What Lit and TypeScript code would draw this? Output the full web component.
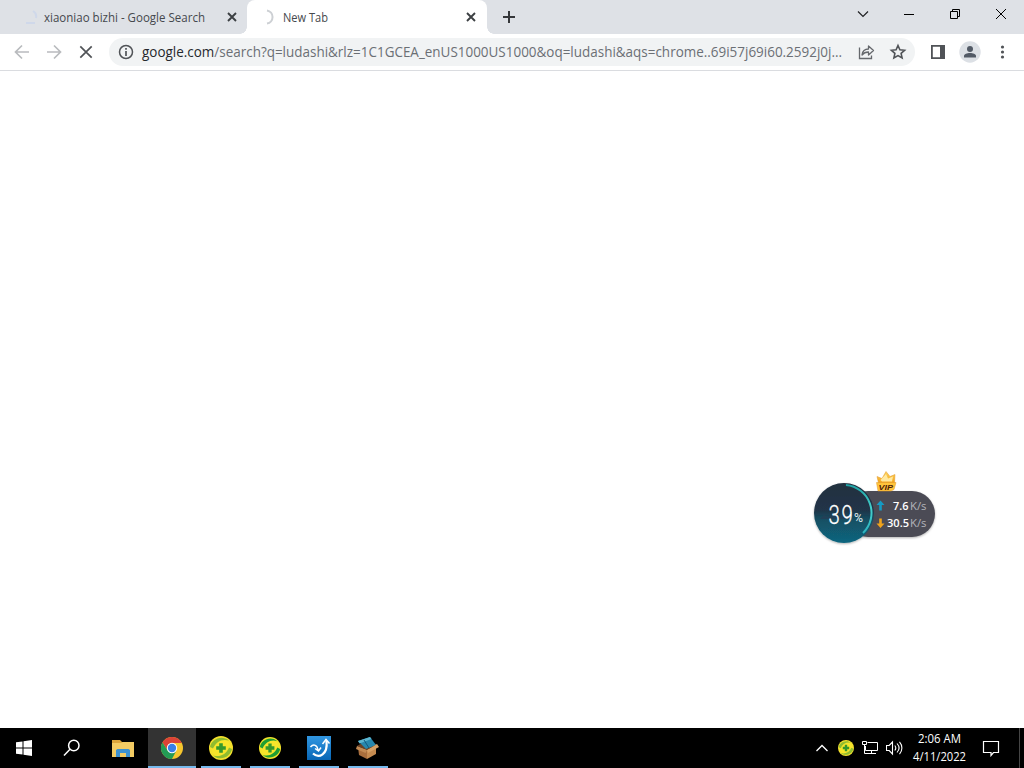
/**
 * Desktop with a browser window, taskbar and traffic monitor widget
 */
import { LitElement, html, svg, css } from 'lit'
import { customElement, property } from 'lit/decorators.js'

// Single line of text fitted to a fixed width
const label = (text: unknown, width: number, cls = '') => html`
  <svg class="label ${cls}" width=${width} height="20">
    <text x="0" y="15" textLength=${width} lengthAdjust="spacingAndGlyphs">${text}</text>
  </svg>
`

@customElement('browser-tab')
export class BrowserTab extends LitElement {
  static styles = css`
    :host {
      display: flex;
      align-items: center;
      box-sizing: border-box;
      height: 34px;
      padding: 0 8px 0 14px;
      color: #45484d;
    }
    :host([active]) {
      position: relative;
      background: #fff;
      border-radius: 8px 8px 0 0;
    }
    /* Flared feet of the active tab */
    :host([active])::before,
    :host([active])::after {
      content: '';
      position: absolute;
      bottom: 0;
      width: 7px;
      height: 7px;
    }
    :host([active])::before {
      left: -7px;
      background: radial-gradient(circle at 0 0, transparent 6.500px, #fff 7px);
    }
    :host([active])::after {
      right: -7px;
      background: radial-gradient(circle at 100% 0, transparent 6.500px, #fff 7px);
    }
    .label {
      font: 12px 'Open Sans', 'Noto Sans', sans-serif;
      fill: currentColor;
      display: block;
      overflow: visible;
      margin: -1px auto 0 6px;
    }
  `

  @property({ type: String }) name = ''
  @property({ type: Number }) textWidth = 50
  @property({ type: Boolean, reflect: true }) active = false

  render() {
    return html`
      <svg width="16" height="16" fill="none" stroke-width="2">
        ${this.active
          ? svg`<path d="M6 1.400A6.700 6.700 0 0 1 6 14.600" stroke="#cdd0d4"/>`
          : svg`<path d="M11 2a6.500 6.500 0 0 1 3 7M4 14h9" stroke="#cfd8ea"/>`}
      </svg>
      ${label(this.name, this.textWidth)}
      <svg width="16" height="16" stroke="#3c4043" stroke-width="1.900">
        <path d="M4 4l8 8M12 4l-8 8" />
      </svg>
    `
  }
}

@customElement('traffic-widget')
export class TrafficWidget extends LitElement {
  static styles = css`
    :host {
      display: block;
      font-family: 'Open Sans', 'Noto Sans', sans-serif;
    }
    svg {
      display: block;
    }
    .load {
      font: 25.500px Roboto, sans-serif;
      font-weight: 300;
      fill: #fff;
      stroke: #fff;
      stroke-width: 0.3px;
    }
    .percent {
      font: 12px Roboto, sans-serif;
      fill: #e3eff3;
    }
    .rate {
      font-size: 11.500px;
      font-weight: 600;
      fill: #fff;
    }
    .unit {
      font-size: 11.500px;
      fill: #b3b4bb;
    }
    .vip {
      font: italic 900 8px 'Liberation Sans', sans-serif;
      fill: #4c1d08;
    }
  `

  render() {
    return html`
      <svg width="130" height="84" viewBox="810 466 130 84">
        <defs>
          <linearGradient id="disc" x1="0" y1="0" x2="0" y2="1">
            <stop offset="0" stop-color="#20303f" />
            <stop offset=".45" stop-color="#203448" />
            <stop offset=".62" stop-color="#135064" />
            <stop offset="1" stop-color="#10667f" />
          </linearGradient>
          <linearGradient id="arc" x1="0" y1="0" x2="0" y2="1">
            <stop offset="0" stop-color="#1fa3a5" />
            <stop offset=".5" stop-color="#45d0cc" />
            <stop offset="1" stop-color="#2cb3bf" />
          </linearGradient>
          <linearGradient id="gold" x1="0" y1="0" x2="0" y2="1">
            <stop offset="0" stop-color="#ffd65c" />
            <stop offset="1" stop-color="#f1a21b" />
          </linearGradient>
          <filter id="shade" x="-10%" y="-10%" width="120%" height="130%">
            <feDropShadow dx="0" dy="1" stdDeviation="1" flood-opacity=".3" />
          </filter>
        </defs>
        <g filter="url(#shade)">
          <rect x="845" y="491" width="90" height="46" rx="23" fill="#4b4b55" />
          <circle cx="844" cy="513" r="30" fill="url(#disc)" />
        </g>
        <path d="M820 519l4-4 4 2 5-5 6 5 5-4 8 6z" fill="#214057" />
        <path d="M846 485a28 28 0 0 1 17 48" fill="none" stroke="url(#arc)" stroke-width="2" />
        <text class="load" transform="translate(828.500 524) scale(.8 1)" x="0 16.300" y="0">39</text>
        <text class="percent" x="854" y="522" textLength="9" lengthAdjust="spacingAndGlyphs">%</text>
        <path d="M880.500 500.500l4 4.500h-2.700v5.500h-2.600V505h-2.700z" fill="#159bc4" />
        <path d="M880.500 528l4-4.500h-2.700v-5h-2.600v5h-2.700z" fill="#f0a31c" />
        <text class="rate" x="893" y="510" textLength="15.500" lengthAdjust="spacingAndGlyphs">7.6</text>
        <text class="unit" x="910" y="510" textLength="16.500" lengthAdjust="spacingAndGlyphs">K/s</text>
        <text class="rate" x="887" y="527" textLength="22" lengthAdjust="spacingAndGlyphs">30.5</text>
        <text class="unit" x="910" y="527" textLength="16.500" lengthAdjust="spacingAndGlyphs">K/s</text>
        <g stroke="#e0962a" stroke-width=".5">
          <path d="M878.500 483l-1.500-6.500 5 2 4-7 4 5 5-2-.5 8.500z" fill="url(#gold)" />
          <path d="M880.500 480l5.500-6 2 4.500 5-2-1 5h-10z" fill="#ffe9a0" stroke="none" />
          <path d="M876.500 482.500h19.500l-2 7-3 1.500h-13z" fill="#ffc43b" />
        </g>
        <text class="vip" x="878.500" y="489.500" textLength="14.500" lengthAdjust="spacingAndGlyphs">VIP</text>
      </svg>
    `
  }
}

// Round yellow and green badge with a plus in the middle
const shield = (size: number, edge = '#f4e02c', swirl = '#8fbc30') => html`
  <svg width=${size} height=${size} viewBox="0 0 24 24">
    <circle cx="12" cy="12" r="12" fill=${edge} />
    <circle cx="12" cy="12" r="9.500" fill="#f7e52a" />
    <path d="M1 11C2 4 12-2 20 4.500c-7-2-13 1-16 8zM23 13c-1 7-11 13-19 6.500 7 2 13-1 16-8z" fill=${swirl} />
    <path d="M12 7.200v9.600M7.200 12h9.600" stroke="#35982c" stroke-width="3.600" />
  </svg>
`

const chromeIcon = html`
  <svg width="22" height="22" viewBox="0 0 22 22">
    <circle cx="11" cy="11" r="11" fill="#f6c62e" />
    <path d="M11 6h9.800A11 11 0 0 0 1.470 5.500L6.700 13.500z" fill="#dc4337" />
    <path d="M1.470 5.500A11 11 0 0 0 11 22l4.400-8.500H6.700z" fill="#239b55" />
    <circle cx="11" cy="11" r="5.200" fill="#fff" />
    <circle cx="11" cy="11" r="4.200" fill="#397fe8" />
  </svg>
`

const folderIcon = html`
  <svg width="22" height="19" viewBox="0 0 22 19">
    <path d="M0 1h8l2 2h11v15H0z" fill="#dca53b" />
    <path d="M0 4h9l2-1h11v15H0z" fill="#f3cb63" />
    <path d="M4 18v-7l1.500-1h11l1.500 1v7h-4v-4H8v4z" fill="#3d91cf" />
  </svg>
`

const swirlIcon = html`
  <svg width="24" height="24" viewBox="0 0 24 24">
    <defs>
      <linearGradient id="swirl" x1="0" y1="0" x2="0" y2="1">
        <stop offset="0" stop-color="#3197e2" />
        <stop offset="1" stop-color="#0866b5" />
      </linearGradient>
    </defs>
    <path d="M0 0h24v24H0z" fill="url(#swirl)" />
    <g fill="none" stroke="#fff">
      <path d="M3.500 11c3-3.500 7-2 7.500 3.500M8 12.500l3.500 2.500 2.500-3.500" stroke-width="1.500" />
      <path d="M6 17.500c6 5.500 15 1 13.500-12.500" stroke-width="2.200" />
      <path d="M15.500 8l3.500-4.500 3.500 4" stroke-width="1.500" />
    </g>
  </svg>
`

const boxIcon = html`
  <svg width="23" height="24" viewBox="0 0 23 24">
    <path d="M2 11l9 3v9l-8-4z" fill="#a86e3d" />
    <path d="M11 14l9-4v8l-9 5z" fill="#c58b50" />
    <path d="M1 10l5-3 15 1-10 6z" fill="#694024" />
    <path d="M2 5l12-4 6 8-10 4z" fill="#2687ae" />
    <path d="M2 5l12-4 1.500 2L3.500 7.500z" fill="#5cb5d0" />
    <path d="M8 4l5 8" stroke="#12577c" />
    <path d="M11 14l10-6 2 3-11 6z" fill="#d5a066" />
    <path d="M1 10l10 4-1.500 3L0 13z" fill="#c18a54" />
  </svg>
`

@customElement('app-root')
export class AppRoot extends LitElement {
  static styles = css`
    :host {
      display: flex;
      flex-direction: column;
      position: relative;
      width: 1024px;
      height: 768px;
      overflow: hidden;
      background: #fff;
      font-family: 'Open Sans', 'Noto Sans', sans-serif;
    }
    svg {
      display: block;
      flex: none;
    }
    .label {
      overflow: visible;
      fill: currentColor;
    }

    /* Tab strip */
    .tabs {
      display: flex;
      height: 34px;
      background: #dee1e6;
    }
    .first {
      width: 247px;
      padding-left: 22px;
      padding-right: 7px;
    }
    .second {
      width: 240px;
    }
    .new-tab {
      margin: 10px auto 0 15px;
    }
    .window-buttons {
      display: flex;
      width: 184px;
      padding-top: 6px;
    }
    .window-buttons svg {
      width: 46px;
      height: 16px;
    }

    /* Toolbar */
    .toolbar {
      display: flex;
      align-items: center;
      box-sizing: border-box;
      height: 37px;
      padding-left: 12px;
      border-bottom: 1px solid #dadce0;
    }
    .nav {
      display: flex;
      gap: 12px;
    }
    .address {
      display: flex;
      align-items: center;
      box-sizing: border-box;
      width: 806px;
      height: 28px;
      margin-left: 13px;
      padding: 0 8px;
      border-radius: 14px;
      background: #f1f3f4;
    }
    .url {
      margin: -1px 14px 0 7px;
      font-size: 14.200px;
      color: #6b6f74;
    }
    .domain {
      fill: #25282c;
    }
    .star {
      margin-left: 13px;
    }
    .actions {
      display: flex;
      align-items: center;
      gap: 11px;
      margin-left: 13px;
    }

    .page {
      flex: 1;
    }
    .widget {
      position: absolute;
      left: 810px;
      top: 466px;
    }

    /* Taskbar */
    .taskbar {
      display: flex;
      height: 40px;
      background: #000;
      color: #fff;
    }
    .item {
      display: flex;
      align-items: center;
      justify-content: center;
      box-sizing: border-box;
      width: 48px;
    }
    .item.pinned {
      width: 52px;
      padding-left: 2px;
    }
    .item.running {
      width: 49px;
      background: linear-gradient(#76b9ed, #76b9ed) center bottom / 40px 2px no-repeat;
    }
    .item.current {
      background: linear-gradient(#76b9ed, #76b9ed) center bottom / 48px 2px no-repeat, #333;
    }
    .tray {
      display: flex;
      align-items: center;
      margin-left: auto;
    }
    .badge {
      padding: 0 0 0 9px;
    }
    .clock {
      display: flex;
      flex-direction: column;
      align-items: center;
      width: 53px;
      margin: 0 16px 0 9px;
      padding-bottom: 4px;
      font-size: 12px;
    }
    .clock .label {
      height: 18px;
    }
    .desktop-edge {
      height: 40px;
      width: 4px;
      margin-left: 19px;
      border-left: 1px solid #454545;
    }
  `

  render() {
    return html`
      <div class="tabs">
        <browser-tab class="first" name="xiaoniao bizhi - Google Search" .textWidth=${161}></browser-tab>
        <browser-tab class="second" name="New Tab" .textWidth=${45} active></browser-tab>
        <svg class="new-tab" width="14" height="14" stroke="#35373a" stroke-width="2">
          <path d="M7 1v12M1 7h12" />
        </svg>
        <div class="window-buttons">
          <svg viewBox="0 0 46 16" fill="none" stroke="#202124" stroke-width="1.200"><path d="M18 5.500l5 5 5-5" /></svg>
          <svg viewBox="0 0 46 16" stroke="#000"><path d="M18 8.500h10" /></svg>
          <svg viewBox="0 0 46 16" fill="none" stroke="#000">
            <path d="M18.500 5.500h7v7h-7zM20.500 5.500v-2h7v7h-2" />
          </svg>
          <svg viewBox="0 0 46 16" stroke="#000"><path d="M18 3l10 10M28 3L18 13" /></svg>
        </div>
      </div>

      <div class="toolbar">
        <div class="nav">
          <svg width="20" height="20" fill="none" stroke="#b9bbbe" stroke-width="1.700">
            <path d="M17 10H4M10 3.500L3.500 10l6.500 6.500" />
          </svg>
          <svg width="20" height="20" fill="none" stroke="#b9bbbe" stroke-width="1.700">
            <path d="M3 10h13M10 3.500l6.500 6.500-6.500 6.500" />
          </svg>
          <svg width="20" height="20" stroke="#505357" stroke-width="1.700">
            <path d="M4.300 4.300l11.400 11.400M15.700 4.300L4.300 15.700" />
          </svg>
        </div>
        <div class="address">
          <svg width="18" height="18" fill="none" stroke="#505357" stroke-width="1.500">
            <circle cx="9" cy="9" r="6.500" />
            <path d="M9 8v5M9 5v1.700" stroke-width="1.700" />
          </svg>
          ${label(
            svg`<tspan class="domain">google.com</tspan>/search?q=ludashi&rlz=1C1GCEA_enUS1000US1000&oq=ludashi&aqs=chrome..69i57j69i60.2592j0j...`,
            700,
            'url'
          )}
          <svg width="20" height="18" fill="none" stroke="#65686c" stroke-width="1.300">
            <path d="M3.500 4.500v11h12v-3" />
            <path d="M6 12c.5-4 3-6 6.500-6V3L17.500 7.500l-5 4.500V9C9.500 9 7.500 10 6 12z" stroke-linejoin="round" />
          </svg>
          <svg class="star" width="18" height="18" fill="none" stroke="#505357" stroke-width="1.600">
            <path d="M9 2.500l1.900 4.300 4.700.5-3.500 3.100 1 4.600L9 12.600 4.900 15l1-4.600-3.500-3.100 4.700-.5z" />
          </svg>
        </div>
        <div class="actions">
          <svg width="20" height="20" fill="none" stroke="#505357" stroke-width="1.800">
            <path d="M3.900 3.900h12.200v12.200H3.900z" />
            <path d="M12 4h4v12h-4z" fill="#505357" stroke="none" />
          </svg>
          <svg width="22" height="22" viewBox="0 0 22 22">
            <circle cx="11" cy="11" r="10.700" fill="#dce0e5" />
            <circle cx="11" cy="8" r="3" fill="#525a66" />
            <path d="M5 16.500v-1.500c0-4 12-4 12 0v1.500z" fill="#525a66" />
          </svg>
          <svg width="20" height="20" fill="#505357">
            <circle cx="10.500" cy="5" r="1.600" />
            <circle cx="10.500" cy="10" r="1.600" />
            <circle cx="10.500" cy="15" r="1.600" />
          </svg>
        </div>
      </div>

      <div class="page"></div>
      <traffic-widget class="widget"></traffic-widget>

      <div class="taskbar">
        <div class="item">
          <svg width="16" height="16" fill="#fff">
            <path d="M0 2.300l6.500-.9v6.100H0zM7.500 1.200L16 0v7.500H7.500zM0 8.500h6.500v6.100L0 13.700zM7.500 8.500H16V16l-8.500-1.200z" />
          </svg>
        </div>
        <div class="item">
          <svg width="18" height="18" fill="none" stroke="#fff" stroke-width="1.500">
            <circle cx="10.800" cy="6.500" r="5.200" />
            <path d="M7 10.300L1 16.500" />
          </svg>
        </div>
        <div class="item pinned">${folderIcon}</div>
        <div class="item current">${chromeIcon}</div>
        <div class="item running">${shield(24)}</div>
        <div class="item running">${shield(22, '#f2e32a', '#1f9f33')}</div>
        <div class="item running">${swirlIcon}</div>
        <div class="item running">${boxIcon}</div>

        <div class="tray">
          <svg width="14" height="12" fill="none" stroke="#fff" stroke-width="1.300">
            <path d="M1.500 9L7 3.500 12.500 9" />
          </svg>
          <div class="badge">${shield(16)}</div>
          <svg width="32" height="20" fill="none" stroke="#fff" viewBox="0 0 32 20">
            <path d="M13.500 4.500h10v8h-12V8M17.500 12.500v3M14 15.500h8M8.500 3.500h4v3h-4zM10.500 6.500v9h4" />
          </svg>
          <svg width="18" height="18" fill="none" stroke="#fff" stroke-width="1.100">
            <path d="M.5 6.500h2.700L6.500 3v12l-3.300-3.500H.5zM8.800 6.500c1.200 1.500 1.200 3.500 0 5M11 4.500c2.500 2.700 2.500 6.300 0 9M13.500 2.800c3.200 3.700 3.200 8.700 0 12.400" />
          </svg>
          <div class="clock">
            ${label('2:06 AM', 43)}
            ${label('4/11/2022', 53)}
          </div>
          <svg width="18" height="18" fill="none" stroke="#fff" stroke-width="1.200">
            <path d="M1.500 2.500h15v11h-5L9 16.500v-3H1.500z" />
          </svg>
          <div class="desktop-edge"></div>
        </div>
      </div>
    `
  }
}
